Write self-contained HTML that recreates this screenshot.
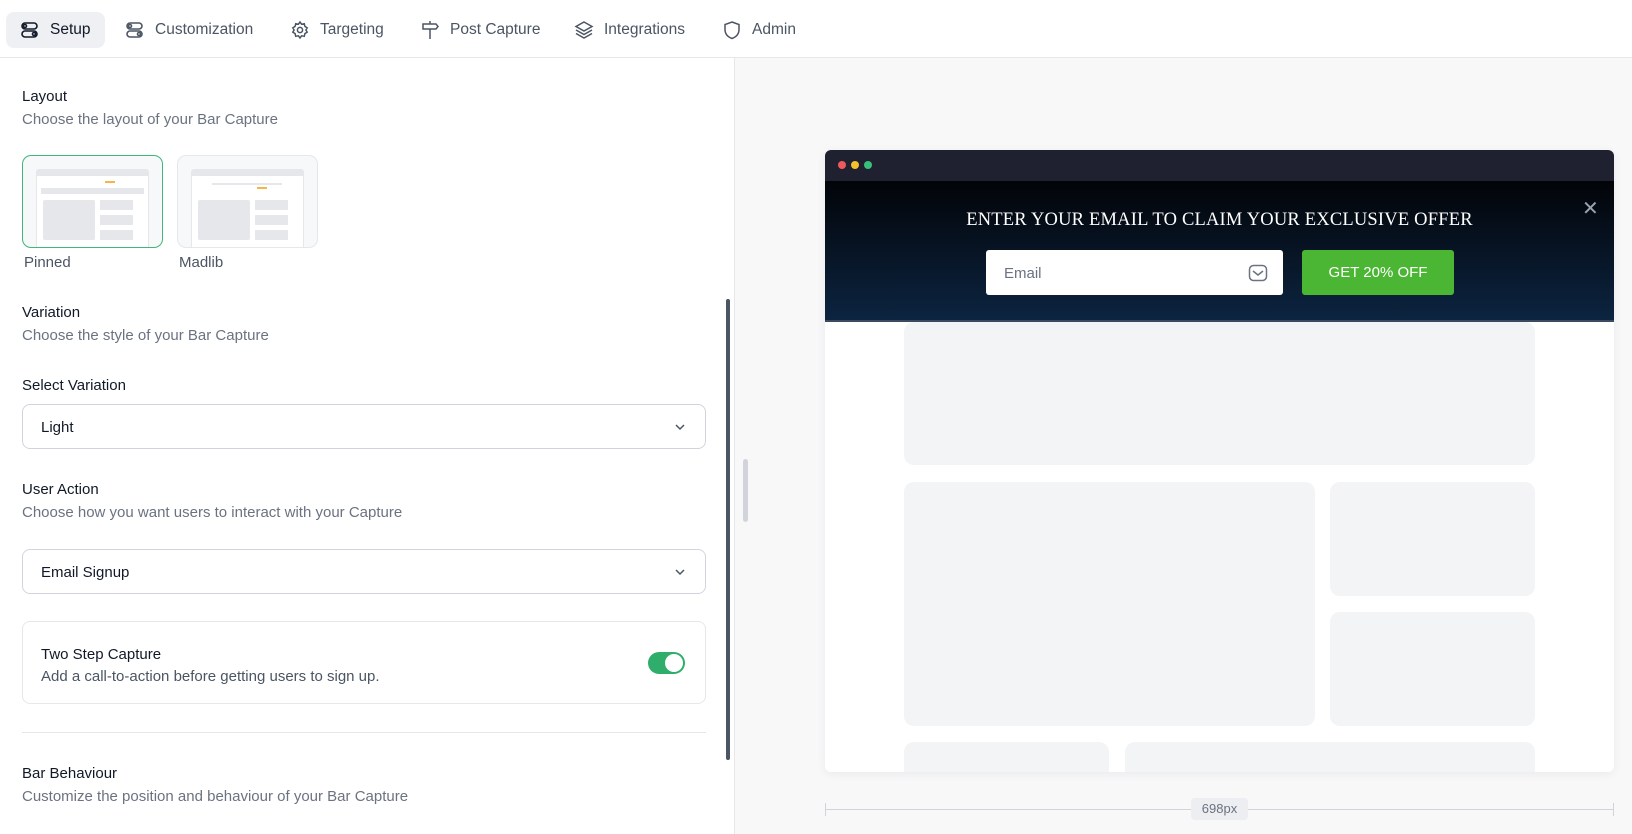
<!DOCTYPE html>
<html><head><meta charset="utf-8"><style>
*{box-sizing:border-box;margin:0;padding:0}
body{width:1632px;height:834px;overflow:hidden;font-family:"Liberation Sans",sans-serif;background:#fff;color:#111827;position:relative}
.a{position:absolute}
.nav{left:0;top:0;width:1632px;height:58px;border-bottom:1px solid #e5e7eb}
.ni{top:0;height:58px;display:flex;align-items:center;font-size:15.5px;color:#4b5563}
.ni svg{width:20px;height:20px;margin-right:10px}
.h{font-size:15px;color:#111827}
.s{font-size:15px;color:#6b7280}
.sel{left:22px;width:684px;height:45px;border:1px solid #d1d5db;border-radius:8px;font-size:15px;display:flex;align-items:center;padding-left:18px;padding-top:2px}
.sel svg{position:absolute;right:18px;top:15px}
.ph{background:#f3f4f6;border-radius:10px}
</style></head><body>
<div class="a nav"></div>
<div class="a" style="left:6px;top:12px;width:99px;height:36px;background:#eef0f3;border-radius:8px"></div>
<div class="a ni" style="left:20px;color:#111827;top:1px"><svg viewBox="0 0 20 20" fill="none" stroke="#111827" stroke-width="1.6"><rect x="2" y="3" width="15" height="6" rx="3"/><circle cx="5" cy="6" r="1.5"/><rect x="2" y="11" width="15" height="6" rx="3"/><circle cx="14" cy="14" r="1.5"/></svg>Setup</div>
<div class="a ni" style="left:125px;top:1px"><svg viewBox="0 0 20 20" fill="none" stroke="#4b5563" stroke-width="1.6"><rect x="2" y="3" width="15" height="6" rx="3"/><circle cx="5" cy="6" r="1.5"/><rect x="2" y="11" width="15" height="6" rx="3"/><circle cx="14" cy="14" r="1.5"/></svg>Customization</div>
<div class="a ni" style="left:290px;top:1px"><svg viewBox="0 0 20 20" fill="none" stroke="#4b5563" stroke-width="1.5"><circle cx="10" cy="10" r="2.6"/><path d="M10 2l1.6 2.2 2.7-.5.6 2.7 2.3 1.5-1.3 2.1 1.3 2.1-2.3 1.5-.6 2.7-2.7-.5L10 18l-1.6-2.2-2.7.5-.6-2.7-2.3-1.5 1.3-2.1-1.3-2.1 2.3-1.5.6-2.7 2.7.5z"/></svg>Targeting</div>
<div class="a ni" style="left:420px;top:1px"><svg viewBox="0 0 20 20" fill="none" stroke="#4b5563" stroke-width="1.5"><path d="M10 1v3M3 4h13l2 2.5-2 2.5H3zM10 9v10"/></svg>Post Capture</div>
<div class="a ni" style="left:574px;top:1px"><svg viewBox="0 0 20 20" fill="none" stroke="#4b5563" stroke-width="1.5"><path d="M10 2l8 4.5-8 4.5-8-4.5z"/><path d="M2 10l8 4.5 8-4.5M2 13.5l8 4.5 8-4.5"/></svg>Integrations</div>
<div class="a ni" style="left:722px;top:1px"><svg viewBox="0 0 20 20" fill="none" stroke="#4b5563" stroke-width="1.5"><path d="M10 2l7 2.5v5c0 4.5-3 7.5-7 9-4-1.5-7-4.5-7-9v-5z"/></svg>Admin</div>

<div class="a" style="left:734px;top:58px;width:898px;height:776px;background:#f8f8f9;border-left:1px solid #e5e7eb"></div>

<div class="a h" style="left:22px;top:88px">Layout</div>
<div class="a s" style="left:22px;top:111px">Choose the layout of your Bar Capture</div>
<div class="a" style="left:22px;top:155px;width:141px;height:93px;border:1.5px solid #3fb67a;border-radius:9px;background:#f7f8f9;overflow:hidden">
 <div class="a" style="left:13px;top:13px;width:113px;height:80px;background:#fff;border:1px solid #e5e7eb;border-radius:3px 3px 0 0"><div style="height:6px;background:#e5e7eb"></div><div class="a" style="left:4px;top:18px;width:103px;height:6px;background:#e5e7eb"></div><div class="a" style="left:6px;top:30px;width:52px;height:40px;background:#e5e7eb;border-radius:2px"></div><div class="a" style="left:63px;top:30px;width:33px;height:10px;background:#e5e7eb"></div><div class="a" style="left:63px;top:45px;width:33px;height:10px;background:#e5e7eb"></div><div class="a" style="left:63px;top:60px;width:33px;height:10px;background:#e5e7eb"></div><div class="a" style="left:68px;top:11px;width:10px;height:2px;background:#f5b54a"></div></div>
</div>
<div class="a" style="left:177px;top:155px;width:141px;height:93px;border:1px solid #e5e7eb;border-radius:9px;background:#f7f8f9;overflow:hidden">
 <div class="a" style="left:13px;top:13px;width:113px;height:80px;background:#fff;border:1px solid #e5e7eb;border-radius:3px 3px 0 0"><div style="height:6px;background:#e5e7eb"></div><div class="a" style="left:6px;top:30px;width:52px;height:40px;background:#e5e7eb;border-radius:2px"></div><div class="a" style="left:63px;top:30px;width:33px;height:10px;background:#e5e7eb"></div><div class="a" style="left:63px;top:45px;width:33px;height:10px;background:#e5e7eb"></div><div class="a" style="left:63px;top:60px;width:33px;height:10px;background:#e5e7eb"></div><div class="a" style="left:20px;top:13px;width:70px;height:2px;background:#e5e7eb"></div><div class="a" style="left:65px;top:17px;width:10px;height:2px;background:#f5b54a"></div></div>
</div>
<div class="a s" style="left:24px;top:254px;color:#4b5563">Pinned</div>
<div class="a s" style="left:179px;top:254px;color:#4b5563">Madlib</div>

<div class="a h" style="left:22px;top:304px">Variation</div>
<div class="a s" style="left:22px;top:327px">Choose the style of your Bar Capture</div>
<div class="a h" style="left:22px;top:377px">Select Variation</div>
<div class="a sel" style="top:404px">Light<svg width="14" height="14" viewBox="0 0 14 14" fill="none" stroke="#4b5563" stroke-width="1.5"><path d="M3 5l4 4 4-4"/></svg></div>
<div class="a h" style="left:22px;top:481px">User Action</div>
<div class="a s" style="left:22px;top:504px">Choose how you want users to interact with your Capture</div>
<div class="a sel" style="top:549px">Email Signup<svg width="14" height="14" viewBox="0 0 14 14" fill="none" stroke="#4b5563" stroke-width="1.5"><path d="M3 5l4 4 4-4"/></svg></div>
<div class="a" style="left:22px;top:621px;width:684px;height:83px;border:1px solid #e5e7eb;border-radius:8px"></div>
<div class="a h" style="left:41px;top:646px">Two Step Capture</div>
<div class="a s" style="left:41px;top:668px;color:#4b5563">Add a call-to-action before getting users to sign up.</div>
<div class="a" style="left:648px;top:652px;width:37px;height:22px;border-radius:11px;background:#2fae6b"><div class="a" style="left:17px;top:2px;width:18px;height:18px;border-radius:50%;background:#fff"></div></div>
<div class="a" style="left:22px;top:732px;width:684px;height:1px;background:#e5e7eb"></div>
<div class="a h" style="left:22px;top:765px">Bar Behaviour</div>
<div class="a s" style="left:22px;top:788px">Customize the position and behaviour of your Bar Capture</div>
<div class="a" style="left:726px;top:299px;width:4px;height:461px;background:#4b5563;border-radius:2px"></div>
<div class="a" style="left:743px;top:459px;width:5px;height:63px;background:#d1d5db;border-radius:3px"></div>

<div class="a" style="left:825px;top:150px;width:789px;height:622px;background:#fff;border-radius:6px;box-shadow:0 2px 10px rgba(0,0,0,.06);overflow:hidden">
 <div class="a" style="left:0;top:0;width:789px;height:31px;background:#1f2130"></div>
 <div class="a" style="left:13px;top:11px;width:8px;height:8px;border-radius:50%;background:#ee5a5a"></div>
 <div class="a" style="left:26px;top:11px;width:8px;height:8px;border-radius:50%;background:#f4c02e"></div>
 <div class="a" style="left:39px;top:11px;width:8px;height:8px;border-radius:50%;background:#38c07a"></div>
 <div class="a ph" style="left:79px;top:172px;width:631px;height:143px"></div>
 <div class="a ph" style="left:79px;top:332px;width:411px;height:244px"></div>
 <div class="a ph" style="left:505px;top:332px;width:205px;height:114px"></div>
 <div class="a ph" style="left:505px;top:462px;width:205px;height:114px"></div>
 <div class="a ph" style="left:79px;top:592px;width:205px;height:60px"></div>
 <div class="a ph" style="left:300px;top:592px;width:410px;height:60px"></div>
 <div class="a" style="left:0;top:31px;width:789px;height:141px;background:linear-gradient(#020408,#0c2440);border-bottom:2px solid #3b4a5e"></div>
 <div class="a" style="left:0;top:60px;width:789px;text-align:center;color:#fff;font-family:'Liberation Serif',serif;font-size:18.5px;letter-spacing:.2px">ENTER YOUR EMAIL TO CLAIM YOUR EXCLUSIVE OFFER</div>
 <div class="a" style="left:757px;top:46px;color:#9ca3af;font-size:20px">✕</div>
 <div class="a" style="left:161px;top:100px;width:297px;height:45px;background:#fff;border-radius:3px;font-size:15px;color:#6b7280;padding:15px 18px">Email</div>
 <svg class="a" style="left:423px;top:113px" width="20" height="20" viewBox="0 0 20 20" fill="none" stroke="#6b7280" stroke-width="1.5"><rect x="1.5" y="2.5" width="17" height="15" rx="4"/><path d="M5 8l5 4 5-4"/></svg>
 <div class="a" style="left:477px;top:100px;width:152px;height:45px;background:#4bb633;border-radius:3px;color:#fff;font-size:15px;text-align:center;line-height:46px">GET 20% OFF</div>
</div>
<div class="a" style="left:825px;top:809px;width:789px;height:1px;background:#d1d5db"></div>
<div class="a" style="left:825px;top:803px;width:1px;height:13px;background:#d1d5db"></div>
<div class="a" style="left:1613px;top:803px;width:1px;height:13px;background:#d1d5db"></div>
<div class="a" style="left:1191px;top:798px;width:57px;height:22px;background:#eceef1;border-radius:4px;font-size:13px;color:#6b7280;text-align:center;line-height:22px">698px</div>
</body></html>
